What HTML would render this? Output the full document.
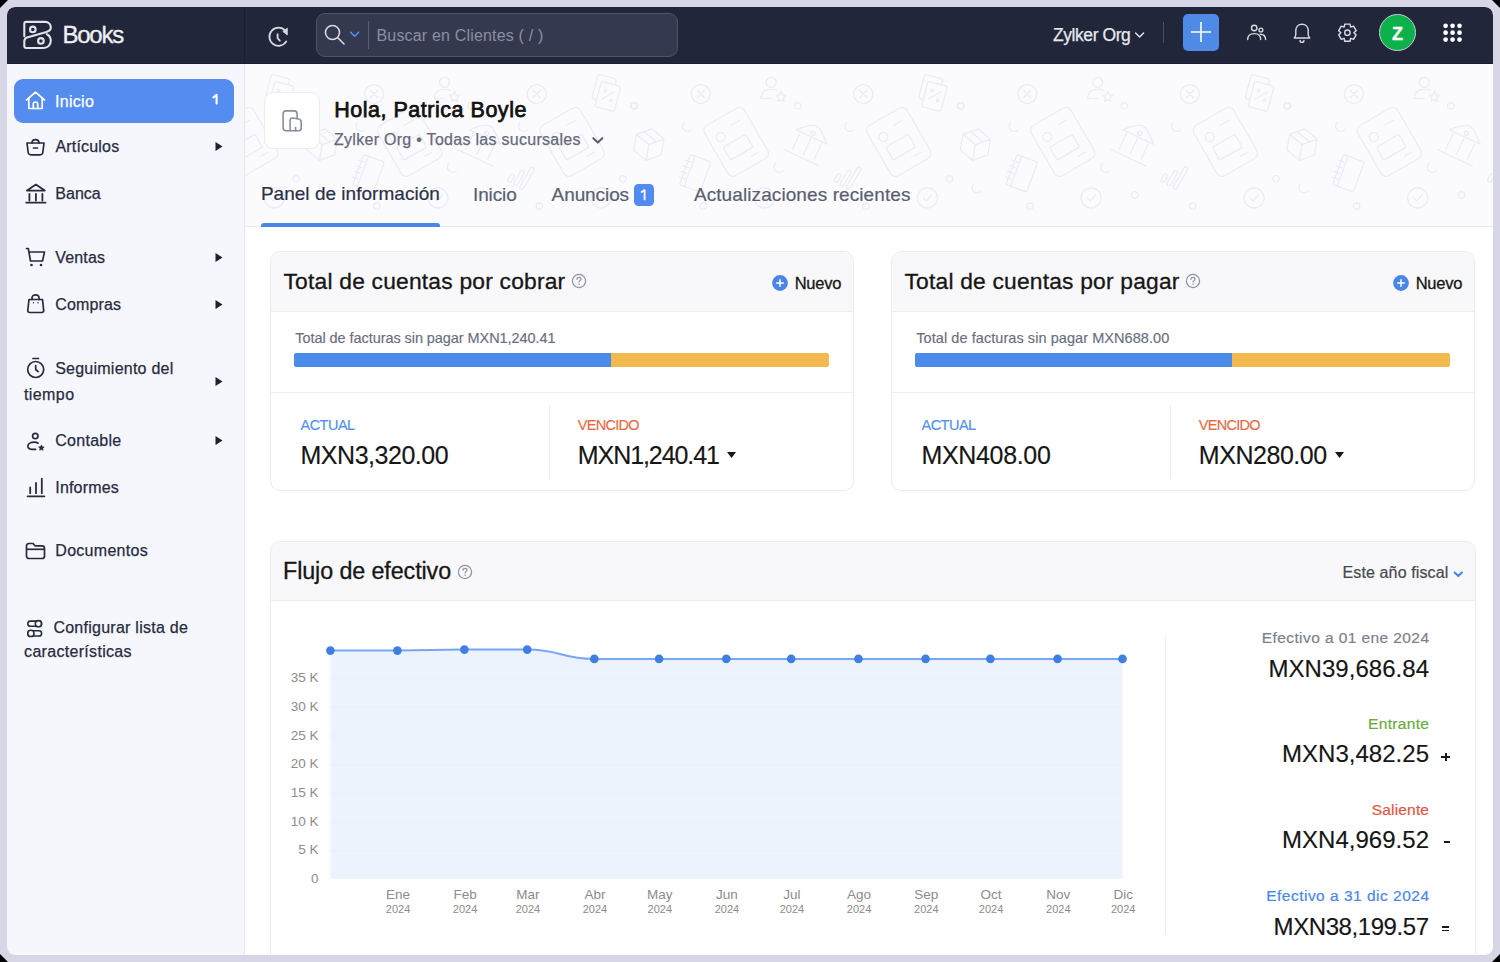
<!DOCTYPE html>
<html><head><meta charset="utf-8"><title>Zoho Books</title>
<style>
html,body{margin:0;padding:0;}
body{width:1500px;height:962px;overflow:hidden;position:relative;background:#000;font-family:"Liberation Sans", sans-serif;}
.frame{position:absolute;left:0;top:0;width:1500px;height:962px;background:#d7d6e7;clip-path:polygon(8px 0,1492px 0,1500px 8px,1500px 954px,1492px 962px,8px 962px,0 954px,0 8px);}
.app{position:absolute;left:0;top:0;width:1500px;height:962px;clip-path:inset(7px 7px 7px 7px round 8px);}
.r{position:absolute;}
.t{position:absolute;white-space:nowrap;line-height:1;}
</style></head>
<body>
<div class="frame"></div>
<div class="app">
<div class="r" style="left:7px;top:7px;width:1486px;height:57px;background:#21263b;border-radius:8px 8px 0 0;"></div>
<div class="r" style="left:244px;top:7px;width:1px;height:57px;background:#1a1e30;"></div>
<div class="r" style="left:7px;top:63px;width:1486px;height:1px;background:#1b1f32;"></div>
<svg class="r" style="left:18px;top:16px;" width="40" height="38" viewBox="0 0 40 38"><g fill="none" stroke="#e2e3e9" stroke-width="2.1" stroke-linecap="round" stroke-linejoin="round"><path d="M6.3 20.2 V7.9 Q6.3 5.9 8.3 5.9 H27 C30.5 5.9 32.8 8.5 32.8 11.5 C32.8 14 31 15.3 28.5 15.9 L9 21.6 C7.3 22.1 6.3 23.5 6.3 25.5 V30 Q6.3 32 8.3 32 H25.7 C29.8 32 32.8 28.7 32.8 24.8 C32.8 21.6 31 19.3 28.8 18.3"/><circle cx="14.8" cy="13.4" r="2.8"/><circle cx="22.9" cy="24.9" r="2.8"/></g></svg>
<div class="t " style="top:23.00px;font-size:24px;color:#eeeff3;letter-spacing:-1.241px;-webkit-text-stroke:0.35px #eeeff3;left:62.50px;">Books</div>
<svg class="r" style="left:262px;top:22.8px;" width="32" height="30" viewBox="0 0 32 30"><g fill="none" stroke="#d6d8e0" stroke-width="1.8" stroke-linecap="round" stroke-linejoin="round"><path d="M23.3 7.6 A9.1 9.1 0 1 0 24.3 18.4"/><path d="M15.6 11.2 V15.1 L17.8 17.6"/></g><path d="M25.3 5.2 L25.3 12 L20.8 8.4 Z" fill="#d6d8e0" stroke="#d6d8e0" stroke-width="0.8" stroke-linejoin="round"/></svg>
<div class="r" style="left:316px;top:13px;width:362px;height:44px;background:#353950;border:1.5px solid #50546a;border-radius:9px;box-sizing:border-box;"></div>
<svg class="r" style="left:324px;top:24px;" width="22" height="21" viewBox="0 0 22 21"><g fill="none" stroke="#d8dae2" stroke-width="1.6" stroke-linecap="round"><circle cx="8.5" cy="8.5" r="7"/><path d="M13.8 13.8 L20 20"/></g></svg>
<svg class="r" style="left:348px;top:29px;" width="13" height="10" viewBox="348 29 13 10"><path d="M350.6 32.2 L354.6 36.2 L358.6 32.2" fill="none" stroke="#4f8ff0" stroke-width="1.6" stroke-linecap="round" stroke-linejoin="round"/></svg>
<div class="r" style="left:368px;top:21px;width:1px;height:28px;background:#5b5f74;"></div>
<div class="t " style="top:28.00px;font-size:16px;color:#8c8fa1;letter-spacing:0.173px;left:376.50px;">Buscar en Clientes ( / )</div>
<div class="t " style="top:27.00px;font-size:17.5px;color:#e8e9ee;letter-spacing:-0.427px;-webkit-text-stroke:0.25px #e8e9ee;left:1053.00px;">Zylker Org</div>
<svg class="r" style="left:1133px;top:30px;" width="14" height="10" viewBox="1133 30 14 10"><path d="M1135.6 33.1 L1139.6 37.1 L1143.6 33.1" fill="none" stroke="#e8e9ee" stroke-width="1.4" stroke-linecap="round" stroke-linejoin="round"/></svg>
<div class="r" style="left:1163px;top:22px;width:1px;height:21px;background:#4a4e63;"></div>
<div class="r" style="left:1183px;top:14px;width:36px;height:37px;background:#4f8ae6;border-radius:5px;"></div>
<svg class="r" style="left:1191px;top:22px;" width="20" height="20" viewBox="0 0 20 20"><path d="M10 0 V20 M0 10 H20" stroke="#fff" stroke-width="1.6"/></svg>
<svg class="r" style="left:1244px;top:22px;" width="24" height="20" viewBox="1244 22 24 20"><g fill="none" stroke="#d9dbe3" stroke-width="1.4" stroke-linecap="round"><circle cx="1254.2" cy="28" r="2.7"/><path d="M1247.7 39.6 C1247.7 35.6 1250.5 33.6 1254.2 33.6 C1257.9 33.6 1260.7 35.6 1260.7 39.6"/><circle cx="1260.9" cy="30" r="1.9"/><path d="M1260.2 34.3 C1263.4 34.3 1265.6 36.2 1265.6 39.6"/></g></svg>
<svg class="r" style="left:1292px;top:22px;" width="20" height="22" viewBox="1292 22 20 22"><g fill="none" stroke="#d9dbe3" stroke-width="1.4" stroke-linejoin="round" stroke-linecap="round"><path d="M1294.3 38 C1295.4 36.8 1295.8 35.8 1295.8 34.3 V30.6 C1295.8 26.7 1298.5 24.2 1302 24.2 C1305.5 24.2 1308.2 26.7 1308.2 30.6 V34.3 C1308.2 35.8 1308.6 36.8 1309.7 38 Z"/><path d="M1300.1 40.4 A1.9 1.9 0 0 0 1303.9 40.4"/></g></svg>
<svg class="r" style="left:1336px;top:21px;" width="23" height="23" viewBox="1336 21 23 23"><g fill="none" stroke="#d9dbe3" stroke-width="1.4" stroke-linejoin="round"><path d="M1344.74 24.10 L1350.06 24.10 L1350.56 26.91 L1350.83 27.06 L1353.52 26.10 L1356.18 30.70 L1354.00 32.54 L1354.00 32.86 L1356.18 34.70 L1353.52 39.30 L1350.83 38.34 L1350.56 38.49 L1350.06 41.30 L1344.74 41.30 L1344.24 38.49 L1343.97 38.34 L1341.28 39.30 L1338.62 34.70 L1340.80 32.86 L1340.80 32.54 L1338.62 30.70 L1341.28 26.10 L1343.97 27.06 L1344.24 26.91Z"/><circle cx="1347.4" cy="32.7" r="2.7"/></g></svg>
<div class="r" style="left:1379px;top:14px;width:37px;height:37px;background:#0db14b;border:1.5px solid #c9cbd3;border-radius:50%;box-sizing:border-box;"></div>
<div class="t " style="top:25.00px;font-size:18px;color:#ffffff;font-weight:700;-webkit-text-stroke:0.3px #ffffff;left:1379.00px;width:37px;text-align:center;">Z</div>
<svg class="r" style="left:1440px;top:20px;" width="25" height="25" viewBox="1440 20 25 25"><circle cx="1445.60" cy="25.80" r="2.35" fill="#ffffff"/><circle cx="1445.60" cy="32.70" r="2.35" fill="#ffffff"/><circle cx="1445.60" cy="39.60" r="2.35" fill="#ffffff"/><circle cx="1452.55" cy="25.80" r="2.35" fill="#ffffff"/><circle cx="1452.55" cy="32.70" r="2.35" fill="#ffffff"/><circle cx="1452.55" cy="39.60" r="2.35" fill="#ffffff"/><circle cx="1459.50" cy="25.80" r="2.35" fill="#ffffff"/><circle cx="1459.50" cy="32.70" r="2.35" fill="#ffffff"/><circle cx="1459.50" cy="39.60" r="2.35" fill="#ffffff"/></svg>
<div class="r" style="left:7px;top:64px;width:237px;height:891px;background:#f6f7fc;border-radius:0 0 0 8px;"></div>
<div class="r" style="left:244px;top:64px;width:1.5px;height:891px;background:#e6e7ee;"></div>
<div class="r" style="left:14px;top:79px;width:220.4px;height:44px;background:#558cef;border-radius:9px;"></div>
<svg class="r" style="left:25px;top:91px;" width="21" height="19" viewBox="0 0 21 19"><g fill="none" stroke="#fff" stroke-width="1.7" stroke-linejoin="round" stroke-linecap="round"><path d="M1.5 9 L10.5 1.2 L19.5 9 M3.8 7.5 V17.5 H17.2 V7.5"/><path d="M8.3 17.5 V13.2 A2.2 2.2 0 0 1 12.7 13.2 V17.5"/></g></svg>
<div class="t " style="top:94.00px;font-size:16px;color:#ffffff;letter-spacing:0.268px;-webkit-text-stroke:0.25px #ffffff;left:55.10px;">Inicio</div>
<svg class="r" style="left:210px;top:90px;" width="12" height="18" viewBox="210 90 12 18"><path d="M213.4 97.4 L216.6 94.8 V103.6" fill="none" stroke="#fff" stroke-width="2.1" stroke-linecap="round" stroke-linejoin="round"/></svg>
<svg class="r" style="left:25px;top:137px;" width="21" height="19" viewBox="0 0 21 19"><g fill="none" stroke="#262b3f" stroke-width="1.7" stroke-linejoin="round" stroke-linecap="round"><path d="M7 6 C7 1.5 14 1.5 14 6"/><path d="M2 6 H19 L17.8 15.5 C17.6 17 16.5 17.8 15 17.8 H6 C4.5 17.8 3.4 17 3.2 15.5 Z"/><path d="M8.5 11 H12.5"/></g></svg>
<div class="t " style="top:139.00px;font-size:16px;color:#262b3f;letter-spacing:0.191px;-webkit-text-stroke:0.25px #262b3f;left:55.40px;">Artículos</div>
<svg class="r" style="left:22px;top:180px;" width="28" height="26" viewBox="22 180 28 26"><g fill="none" stroke="#262b3f" stroke-width="1.8" stroke-linejoin="round" stroke-linecap="round"><path d="M27 190.6 L35.9 184.6 L44.8 190.6 Z"/><path d="M29.4 194 V200.6 M35.9 194 V200.6 M42.4 194 V200.6"/><path d="M26.2 202.6 H45.6"/></g></svg>
<div class="t " style="top:186.00px;font-size:16px;color:#262b3f;letter-spacing:0.022px;-webkit-text-stroke:0.25px #262b3f;left:55.30px;">Banca</div>
<svg class="r" style="left:25px;top:247px;" width="22" height="20" viewBox="0 0 22 20"><g fill="none" stroke="#262b3f" stroke-width="1.7" stroke-linejoin="round" stroke-linecap="round"><path d="M1.5 1.5 H3.3 L5.5 14 H17.5 L19.5 5 H5"/></g><circle cx="6.5" cy="18" r="1.3" fill="#262b3f"/><circle cx="16" cy="18" r="1.3" fill="#262b3f"/></svg>
<div class="t " style="top:250.00px;font-size:16px;color:#262b3f;letter-spacing:0.172px;-webkit-text-stroke:0.25px #262b3f;left:55.20px;">Ventas</div>
<svg class="r" style="left:26px;top:293px;" width="20" height="21" viewBox="0 0 20 21"><g fill="none" stroke="#262b3f" stroke-width="1.7" stroke-linejoin="round" stroke-linecap="round"><path d="M6 6.5 V5 C6 0.8 13 0.8 13 5 V6.5"/><path d="M3 6.5 H16.5 L17.7 17.5 C17.8 18.7 17 19.5 15.8 19.5 H3.7 C2.5 19.5 1.7 18.7 1.8 17.5 Z"/></g><circle cx="7.5" cy="9.8" r="0.7" fill="#262b3f"/><circle cx="12" cy="9.8" r="0.7" fill="#262b3f"/></svg>
<div class="t " style="top:297.00px;font-size:16px;color:#262b3f;letter-spacing:0.166px;-webkit-text-stroke:0.25px #262b3f;left:55.20px;">Compras</div>
<svg class="r" style="left:26px;top:357px;" width="20" height="22" viewBox="0 0 20 22"><g fill="none" stroke="#262b3f" stroke-width="1.7" stroke-linejoin="round" stroke-linecap="round"><path d="M7 1.5 H12.5"/><circle cx="9.7" cy="12.5" r="8"/><path d="M9.7 8.5 V12.5 L12 14.5"/></g></svg>
<div class="t " style="top:361.00px;font-size:16px;color:#262b3f;letter-spacing:0.237px;-webkit-text-stroke:0.25px #262b3f;left:55.20px;">Seguimiento del</div>
<div class="t " style="top:387.00px;font-size:16px;color:#262b3f;letter-spacing:0.406px;-webkit-text-stroke:0.25px #262b3f;left:24.00px;">tiempo</div>
<svg class="r" style="left:22px;top:428px;" width="26" height="26" viewBox="22 428 26 26"><g fill="none" stroke="#262b3f" stroke-width="1.7" stroke-linecap="round" stroke-linejoin="round"><circle cx="35.3" cy="436" r="2.7"/><path d="M38 443.2 C37 442.5 35.8 442.2 34.3 442.2 C30.6 442.2 27.9 443.9 27.9 446.1 C27.9 448.1 29.5 449.3 31.6 449.3 H35.6"/></g><path d="M41.4 444.9 L42.3 446.7 L44.2 447 L42.8 448.4 L43.1 450.3 L41.4 449.4 L39.7 450.3 L40 448.4 L38.6 447 L40.5 446.7 Z" fill="#262b3f" stroke="#262b3f" stroke-width="0.6" stroke-linejoin="round"/></svg>
<div class="t " style="top:433.00px;font-size:16px;color:#262b3f;letter-spacing:0.261px;-webkit-text-stroke:0.25px #262b3f;left:55.30px;">Contable</div>
<svg class="r" style="left:22px;top:474px;" width="26" height="26" viewBox="22 474 26 26"><g fill="none" stroke="#262b3f" stroke-width="1.8" stroke-linecap="round"><path d="M30.2 487.3 V493.2 M36 483 V493.2 M41.8 478.6 V493.2 M27.6 496.3 H44.4"/></g></svg>
<div class="t " style="top:480.00px;font-size:16px;color:#262b3f;letter-spacing:0.165px;-webkit-text-stroke:0.25px #262b3f;left:55.30px;">Informes</div>
<svg class="r" style="left:25.3px;top:542px;" width="21" height="18" viewBox="0 0 21 18"><g fill="none" stroke="#262b3f" stroke-width="1.7" stroke-linejoin="round"><path d="M1.5 4 C1.5 2.5 2.5 1.5 4 1.5 H8 L10 3.8 H17 C18.5 3.8 19.5 4.8 19.5 6.3 V14 C19.5 15.5 18.5 16.5 17 16.5 H4 C2.5 16.5 1.5 15.5 1.5 14 Z"/><path d="M1.5 7.3 H19.5"/></g></svg>
<div class="t " style="top:543.00px;font-size:16px;color:#262b3f;letter-spacing:0.283px;-webkit-text-stroke:0.25px #262b3f;left:55.30px;">Documentos</div>
<svg class="r" style="left:22px;top:614px;" width="26" height="26" viewBox="22 614 26 26"><g fill="none" stroke="#262b3f" stroke-width="1.55"><rect x="27.8" y="621.1" width="13.8" height="5.2" rx="2.6"/><circle cx="38.4" cy="623.7" r="3.1" fill="#f6f7fc"/><rect x="27.8" y="630.8" width="13.8" height="5.2" rx="2.6"/><circle cx="30.9" cy="633.4" r="3.1" fill="#f6f7fc"/></g></svg>
<div class="t " style="top:620.00px;font-size:16px;color:#262b3f;letter-spacing:0.254px;-webkit-text-stroke:0.25px #262b3f;left:53.40px;">Configurar lista de</div>
<div class="t " style="top:644.00px;font-size:16px;color:#262b3f;letter-spacing:0.306px;-webkit-text-stroke:0.25px #262b3f;left:24.10px;">características</div>
<svg class="r" style="left:215px;top:142.0px;" width="8" height="9" viewBox="0 0 8 9"><path d="M0.5 0 L7.5 4.5 L0.5 9 Z" fill="#1d2133"/></svg>
<svg class="r" style="left:215px;top:252.7px;" width="8" height="9" viewBox="0 0 8 9"><path d="M0.5 0 L7.5 4.5 L0.5 9 Z" fill="#1d2133"/></svg>
<svg class="r" style="left:215px;top:299.7px;" width="8" height="9" viewBox="0 0 8 9"><path d="M0.5 0 L7.5 4.5 L0.5 9 Z" fill="#1d2133"/></svg>
<svg class="r" style="left:215px;top:377.4px;" width="8" height="9" viewBox="0 0 8 9"><path d="M0.5 0 L7.5 4.5 L0.5 9 Z" fill="#1d2133"/></svg>
<svg class="r" style="left:215px;top:436.0px;" width="8" height="9" viewBox="0 0 8 9"><path d="M0.5 0 L7.5 4.5 L0.5 9 Z" fill="#1d2133"/></svg>
<div class="r" style="left:245px;top:64px;width:1248px;height:163px;background:#fbfbfe;"></div>
<div class="r" style="left:245px;top:226px;width:1248px;height:1px;background:#e7e8ef;"></div>
<div class="r" style="left:245px;top:227px;width:1248px;height:728px;background:#ffffff;border-radius:0 0 8px 0;"></div>
<svg class="r" style="left:245px;top:64px;" width="1248" height="163" viewBox="245 64 1248 163"><g fill="none" stroke="#eaeaf8" stroke-width="1.25" stroke-linecap="round" stroke-linejoin="round"><g transform="translate(-46.8 94.0) rotate(15)"><rect x="-13" y="-17" width="19" height="25" rx="2"/><rect x="-8" y="-11" width="20" height="26" rx="2" fill="#fbfbfe"/><path d="M-3 6 L7 -4"/><circle cx="-2" cy="-3" r="1.2"/><circle cx="6" cy="5" r="1.2"/></g><g transform="translate(-18.7 105.8) rotate(0)"><circle r="3.3"/></g><g transform="translate(-30.4 178.8) rotate(0)"><circle r="3.3"/></g><g transform="translate(144.5 105.8) rotate(0)"><circle r="3.3"/></g><g transform="translate(307.1 105.8) rotate(0)"><circle r="3.3"/></g><g transform="translate(50.2 206.1) rotate(0)"><circle r="3.3"/></g><g transform="translate(212.8 206.1) rotate(0)"><circle r="3.3"/></g><g transform="translate(155.0 195.0) rotate(0)"><circle r="3.3"/></g><g transform="translate(-4.4 144.6) rotate(10)"><path d="M0 -16 L14 -8 L14 8 L0 16 L-14 8 L-14 -8 Z M-14 -8 L0 0 L14 -8 M0 0 V16 M-7 -12 L7 -4"/></g><g transform="translate(33.8 126.9) rotate(0)"><path d="M-3 -4.5 A5 5 0 0 0 4.5 3"/></g><g transform="translate(196.4 126.9) rotate(0)"><path d="M-3 -4.5 A5 5 0 0 0 4.5 3"/></g><g transform="translate(125.4 167.9) rotate(0)"><path d="M-3 -4.5 A5 5 0 0 0 4.5 3"/></g><g transform="translate(-3.1 188.4) rotate(0)"><path d="M-3 -4.5 A5 5 0 0 0 4.5 3"/></g><g transform="translate(42.0 173.3) rotate(20)"><rect x="-11" y="-16" width="22" height="32" rx="2"/><path d="M-6 -16 V16 M-14 -9 H-8 M-14 -3 H-8 M-14 3 H-8 M-14 9 H-8"/></g><g transform="translate(47.5 94.0) rotate(0)"><circle r="9.5"/><path d="M-3.5 -3.5 L3.5 3.5 M3.5 -3.5 L-3.5 3.5"/></g><g transform="translate(210.1 94.0) rotate(0)"><circle r="9.5"/><path d="M-3.5 -3.5 L3.5 3.5 M3.5 -3.5 L-3.5 3.5"/></g><g transform="translate(83.0 141.9) rotate(-30)"><rect x="-23" y="-29" width="46" height="58" rx="6"/><circle cx="-11" cy="-12" r="4.5"/><rect x="-14" y="-2" width="26" height="15" rx="1.5"/><path d="M4 -17 H14 M6 20 H14"/></g><g transform="translate(245.6 141.9) rotate(-30)"><rect x="-23" y="-29" width="46" height="58" rx="6"/><circle cx="-11" cy="-12" r="4.5"/><rect x="-14" y="-2" width="26" height="15" rx="1.5"/><path d="M4 -17 H14 M6 20 H14"/></g><g transform="translate(119.9 91.3) rotate(0)"><circle cx="-2" cy="-9" r="5"/><path d="M-12 7 C-12 0 -8 -2 -2 -2 C1 -2 3 -1.5 4 -1"/><path d="M-12 7 H-2"/><path d="M8 0 L9.5 3.5 L13 4 L10.5 6.5 L11 10 L8 8.3 L5 10 L5.5 6.5 L3 4 L6.5 3.5 Z"/></g><g transform="translate(155.4 143.3) rotate(25)"><path d="M-17 -7 C-10 -15 -5 -19 0 -19 C5 -19 12 -12 17 -7 Z M-12 -5 V12 M0 -5 V12 M12 -5 V12 M-19 16 H19"/><circle cx="0" cy="-11" r="2"/></g><g transform="translate(193.7 176.0) rotate(30)"><rect x="-9" y="2" width="4" height="9" rx="2"/><rect x="-2" y="-6" width="4" height="17" rx="2"/><rect x="5" y="-14" width="4" height="25" rx="2"/></g><g transform="translate(111.3 197.9) rotate(0)"><circle r="10"/><path d="M-4 0 L-1 3 L4.5 -3"/></g><g transform="translate(274.3 197.9) rotate(0)"><circle r="10"/><path d="M-4 0 L-1 3 L4.5 -3"/></g><g transform="translate(279.8 94.0) rotate(15)"><rect x="-13" y="-17" width="19" height="25" rx="2"/><rect x="-8" y="-11" width="20" height="26" rx="2" fill="#fbfbfe"/><path d="M-3 6 L7 -4"/><circle cx="-2" cy="-3" r="1.2"/><circle cx="6" cy="5" r="1.2"/></g><g transform="translate(307.9 105.8) rotate(0)"><circle r="3.3"/></g><g transform="translate(296.2 178.8) rotate(0)"><circle r="3.3"/></g><g transform="translate(471.1 105.8) rotate(0)"><circle r="3.3"/></g><g transform="translate(633.7 105.8) rotate(0)"><circle r="3.3"/></g><g transform="translate(376.8 206.1) rotate(0)"><circle r="3.3"/></g><g transform="translate(539.4 206.1) rotate(0)"><circle r="3.3"/></g><g transform="translate(481.6 195.0) rotate(0)"><circle r="3.3"/></g><g transform="translate(322.2 144.6) rotate(10)"><path d="M0 -16 L14 -8 L14 8 L0 16 L-14 8 L-14 -8 Z M-14 -8 L0 0 L14 -8 M0 0 V16 M-7 -12 L7 -4"/></g><g transform="translate(360.4 126.9) rotate(0)"><path d="M-3 -4.5 A5 5 0 0 0 4.5 3"/></g><g transform="translate(523.0 126.9) rotate(0)"><path d="M-3 -4.5 A5 5 0 0 0 4.5 3"/></g><g transform="translate(452.0 167.9) rotate(0)"><path d="M-3 -4.5 A5 5 0 0 0 4.5 3"/></g><g transform="translate(323.5 188.4) rotate(0)"><path d="M-3 -4.5 A5 5 0 0 0 4.5 3"/></g><g transform="translate(368.6 173.3) rotate(20)"><rect x="-11" y="-16" width="22" height="32" rx="2"/><path d="M-6 -16 V16 M-14 -9 H-8 M-14 -3 H-8 M-14 3 H-8 M-14 9 H-8"/></g><g transform="translate(374.1 94.0) rotate(0)"><circle r="9.5"/><path d="M-3.5 -3.5 L3.5 3.5 M3.5 -3.5 L-3.5 3.5"/></g><g transform="translate(536.7 94.0) rotate(0)"><circle r="9.5"/><path d="M-3.5 -3.5 L3.5 3.5 M3.5 -3.5 L-3.5 3.5"/></g><g transform="translate(409.6 141.9) rotate(-30)"><rect x="-23" y="-29" width="46" height="58" rx="6"/><circle cx="-11" cy="-12" r="4.5"/><rect x="-14" y="-2" width="26" height="15" rx="1.5"/><path d="M4 -17 H14 M6 20 H14"/></g><g transform="translate(572.2 141.9) rotate(-30)"><rect x="-23" y="-29" width="46" height="58" rx="6"/><circle cx="-11" cy="-12" r="4.5"/><rect x="-14" y="-2" width="26" height="15" rx="1.5"/><path d="M4 -17 H14 M6 20 H14"/></g><g transform="translate(446.5 91.3) rotate(0)"><circle cx="-2" cy="-9" r="5"/><path d="M-12 7 C-12 0 -8 -2 -2 -2 C1 -2 3 -1.5 4 -1"/><path d="M-12 7 H-2"/><path d="M8 0 L9.5 3.5 L13 4 L10.5 6.5 L11 10 L8 8.3 L5 10 L5.5 6.5 L3 4 L6.5 3.5 Z"/></g><g transform="translate(482.0 143.3) rotate(25)"><path d="M-17 -7 C-10 -15 -5 -19 0 -19 C5 -19 12 -12 17 -7 Z M-12 -5 V12 M0 -5 V12 M12 -5 V12 M-19 16 H19"/><circle cx="0" cy="-11" r="2"/></g><g transform="translate(520.3 176.0) rotate(30)"><rect x="-9" y="2" width="4" height="9" rx="2"/><rect x="-2" y="-6" width="4" height="17" rx="2"/><rect x="5" y="-14" width="4" height="25" rx="2"/></g><g transform="translate(437.9 197.9) rotate(0)"><circle r="10"/><path d="M-4 0 L-1 3 L4.5 -3"/></g><g transform="translate(600.9 197.9) rotate(0)"><circle r="10"/><path d="M-4 0 L-1 3 L4.5 -3"/></g><g transform="translate(606.4 94.0) rotate(15)"><rect x="-13" y="-17" width="19" height="25" rx="2"/><rect x="-8" y="-11" width="20" height="26" rx="2" fill="#fbfbfe"/><path d="M-3 6 L7 -4"/><circle cx="-2" cy="-3" r="1.2"/><circle cx="6" cy="5" r="1.2"/></g><g transform="translate(634.5 105.8) rotate(0)"><circle r="3.3"/></g><g transform="translate(622.8 178.8) rotate(0)"><circle r="3.3"/></g><g transform="translate(797.7 105.8) rotate(0)"><circle r="3.3"/></g><g transform="translate(960.3 105.8) rotate(0)"><circle r="3.3"/></g><g transform="translate(703.4 206.1) rotate(0)"><circle r="3.3"/></g><g transform="translate(866.0 206.1) rotate(0)"><circle r="3.3"/></g><g transform="translate(808.2 195.0) rotate(0)"><circle r="3.3"/></g><g transform="translate(648.8 144.6) rotate(10)"><path d="M0 -16 L14 -8 L14 8 L0 16 L-14 8 L-14 -8 Z M-14 -8 L0 0 L14 -8 M0 0 V16 M-7 -12 L7 -4"/></g><g transform="translate(687.0 126.9) rotate(0)"><path d="M-3 -4.5 A5 5 0 0 0 4.5 3"/></g><g transform="translate(849.6 126.9) rotate(0)"><path d="M-3 -4.5 A5 5 0 0 0 4.5 3"/></g><g transform="translate(778.6 167.9) rotate(0)"><path d="M-3 -4.5 A5 5 0 0 0 4.5 3"/></g><g transform="translate(650.1 188.4) rotate(0)"><path d="M-3 -4.5 A5 5 0 0 0 4.5 3"/></g><g transform="translate(695.2 173.3) rotate(20)"><rect x="-11" y="-16" width="22" height="32" rx="2"/><path d="M-6 -16 V16 M-14 -9 H-8 M-14 -3 H-8 M-14 3 H-8 M-14 9 H-8"/></g><g transform="translate(700.7 94.0) rotate(0)"><circle r="9.5"/><path d="M-3.5 -3.5 L3.5 3.5 M3.5 -3.5 L-3.5 3.5"/></g><g transform="translate(863.3 94.0) rotate(0)"><circle r="9.5"/><path d="M-3.5 -3.5 L3.5 3.5 M3.5 -3.5 L-3.5 3.5"/></g><g transform="translate(736.2 141.9) rotate(-30)"><rect x="-23" y="-29" width="46" height="58" rx="6"/><circle cx="-11" cy="-12" r="4.5"/><rect x="-14" y="-2" width="26" height="15" rx="1.5"/><path d="M4 -17 H14 M6 20 H14"/></g><g transform="translate(898.8 141.9) rotate(-30)"><rect x="-23" y="-29" width="46" height="58" rx="6"/><circle cx="-11" cy="-12" r="4.5"/><rect x="-14" y="-2" width="26" height="15" rx="1.5"/><path d="M4 -17 H14 M6 20 H14"/></g><g transform="translate(773.1 91.3) rotate(0)"><circle cx="-2" cy="-9" r="5"/><path d="M-12 7 C-12 0 -8 -2 -2 -2 C1 -2 3 -1.5 4 -1"/><path d="M-12 7 H-2"/><path d="M8 0 L9.5 3.5 L13 4 L10.5 6.5 L11 10 L8 8.3 L5 10 L5.5 6.5 L3 4 L6.5 3.5 Z"/></g><g transform="translate(808.6 143.3) rotate(25)"><path d="M-17 -7 C-10 -15 -5 -19 0 -19 C5 -19 12 -12 17 -7 Z M-12 -5 V12 M0 -5 V12 M12 -5 V12 M-19 16 H19"/><circle cx="0" cy="-11" r="2"/></g><g transform="translate(846.9 176.0) rotate(30)"><rect x="-9" y="2" width="4" height="9" rx="2"/><rect x="-2" y="-6" width="4" height="17" rx="2"/><rect x="5" y="-14" width="4" height="25" rx="2"/></g><g transform="translate(764.5 197.9) rotate(0)"><circle r="10"/><path d="M-4 0 L-1 3 L4.5 -3"/></g><g transform="translate(927.5 197.9) rotate(0)"><circle r="10"/><path d="M-4 0 L-1 3 L4.5 -3"/></g><g transform="translate(933.0 94.0) rotate(15)"><rect x="-13" y="-17" width="19" height="25" rx="2"/><rect x="-8" y="-11" width="20" height="26" rx="2" fill="#fbfbfe"/><path d="M-3 6 L7 -4"/><circle cx="-2" cy="-3" r="1.2"/><circle cx="6" cy="5" r="1.2"/></g><g transform="translate(961.1 105.8) rotate(0)"><circle r="3.3"/></g><g transform="translate(949.4 178.8) rotate(0)"><circle r="3.3"/></g><g transform="translate(1124.3 105.8) rotate(0)"><circle r="3.3"/></g><g transform="translate(1286.9 105.8) rotate(0)"><circle r="3.3"/></g><g transform="translate(1030.0 206.1) rotate(0)"><circle r="3.3"/></g><g transform="translate(1192.6 206.1) rotate(0)"><circle r="3.3"/></g><g transform="translate(1134.8 195.0) rotate(0)"><circle r="3.3"/></g><g transform="translate(975.4 144.6) rotate(10)"><path d="M0 -16 L14 -8 L14 8 L0 16 L-14 8 L-14 -8 Z M-14 -8 L0 0 L14 -8 M0 0 V16 M-7 -12 L7 -4"/></g><g transform="translate(1013.6 126.9) rotate(0)"><path d="M-3 -4.5 A5 5 0 0 0 4.5 3"/></g><g transform="translate(1176.2 126.9) rotate(0)"><path d="M-3 -4.5 A5 5 0 0 0 4.5 3"/></g><g transform="translate(1105.2 167.9) rotate(0)"><path d="M-3 -4.5 A5 5 0 0 0 4.5 3"/></g><g transform="translate(976.7 188.4) rotate(0)"><path d="M-3 -4.5 A5 5 0 0 0 4.5 3"/></g><g transform="translate(1021.8 173.3) rotate(20)"><rect x="-11" y="-16" width="22" height="32" rx="2"/><path d="M-6 -16 V16 M-14 -9 H-8 M-14 -3 H-8 M-14 3 H-8 M-14 9 H-8"/></g><g transform="translate(1027.3 94.0) rotate(0)"><circle r="9.5"/><path d="M-3.5 -3.5 L3.5 3.5 M3.5 -3.5 L-3.5 3.5"/></g><g transform="translate(1189.9 94.0) rotate(0)"><circle r="9.5"/><path d="M-3.5 -3.5 L3.5 3.5 M3.5 -3.5 L-3.5 3.5"/></g><g transform="translate(1062.8 141.9) rotate(-30)"><rect x="-23" y="-29" width="46" height="58" rx="6"/><circle cx="-11" cy="-12" r="4.5"/><rect x="-14" y="-2" width="26" height="15" rx="1.5"/><path d="M4 -17 H14 M6 20 H14"/></g><g transform="translate(1225.4 141.9) rotate(-30)"><rect x="-23" y="-29" width="46" height="58" rx="6"/><circle cx="-11" cy="-12" r="4.5"/><rect x="-14" y="-2" width="26" height="15" rx="1.5"/><path d="M4 -17 H14 M6 20 H14"/></g><g transform="translate(1099.7 91.3) rotate(0)"><circle cx="-2" cy="-9" r="5"/><path d="M-12 7 C-12 0 -8 -2 -2 -2 C1 -2 3 -1.5 4 -1"/><path d="M-12 7 H-2"/><path d="M8 0 L9.5 3.5 L13 4 L10.5 6.5 L11 10 L8 8.3 L5 10 L5.5 6.5 L3 4 L6.5 3.5 Z"/></g><g transform="translate(1135.2 143.3) rotate(25)"><path d="M-17 -7 C-10 -15 -5 -19 0 -19 C5 -19 12 -12 17 -7 Z M-12 -5 V12 M0 -5 V12 M12 -5 V12 M-19 16 H19"/><circle cx="0" cy="-11" r="2"/></g><g transform="translate(1173.5 176.0) rotate(30)"><rect x="-9" y="2" width="4" height="9" rx="2"/><rect x="-2" y="-6" width="4" height="17" rx="2"/><rect x="5" y="-14" width="4" height="25" rx="2"/></g><g transform="translate(1091.1 197.9) rotate(0)"><circle r="10"/><path d="M-4 0 L-1 3 L4.5 -3"/></g><g transform="translate(1254.1 197.9) rotate(0)"><circle r="10"/><path d="M-4 0 L-1 3 L4.5 -3"/></g><g transform="translate(1259.6 94.0) rotate(15)"><rect x="-13" y="-17" width="19" height="25" rx="2"/><rect x="-8" y="-11" width="20" height="26" rx="2" fill="#fbfbfe"/><path d="M-3 6 L7 -4"/><circle cx="-2" cy="-3" r="1.2"/><circle cx="6" cy="5" r="1.2"/></g><g transform="translate(1287.7 105.8) rotate(0)"><circle r="3.3"/></g><g transform="translate(1276.0 178.8) rotate(0)"><circle r="3.3"/></g><g transform="translate(1450.9 105.8) rotate(0)"><circle r="3.3"/></g><g transform="translate(1613.5 105.8) rotate(0)"><circle r="3.3"/></g><g transform="translate(1356.6 206.1) rotate(0)"><circle r="3.3"/></g><g transform="translate(1519.2 206.1) rotate(0)"><circle r="3.3"/></g><g transform="translate(1461.4 195.0) rotate(0)"><circle r="3.3"/></g><g transform="translate(1302.0 144.6) rotate(10)"><path d="M0 -16 L14 -8 L14 8 L0 16 L-14 8 L-14 -8 Z M-14 -8 L0 0 L14 -8 M0 0 V16 M-7 -12 L7 -4"/></g><g transform="translate(1340.2 126.9) rotate(0)"><path d="M-3 -4.5 A5 5 0 0 0 4.5 3"/></g><g transform="translate(1502.8 126.9) rotate(0)"><path d="M-3 -4.5 A5 5 0 0 0 4.5 3"/></g><g transform="translate(1431.8 167.9) rotate(0)"><path d="M-3 -4.5 A5 5 0 0 0 4.5 3"/></g><g transform="translate(1303.3 188.4) rotate(0)"><path d="M-3 -4.5 A5 5 0 0 0 4.5 3"/></g><g transform="translate(1348.4 173.3) rotate(20)"><rect x="-11" y="-16" width="22" height="32" rx="2"/><path d="M-6 -16 V16 M-14 -9 H-8 M-14 -3 H-8 M-14 3 H-8 M-14 9 H-8"/></g><g transform="translate(1353.9 94.0) rotate(0)"><circle r="9.5"/><path d="M-3.5 -3.5 L3.5 3.5 M3.5 -3.5 L-3.5 3.5"/></g><g transform="translate(1516.5 94.0) rotate(0)"><circle r="9.5"/><path d="M-3.5 -3.5 L3.5 3.5 M3.5 -3.5 L-3.5 3.5"/></g><g transform="translate(1389.4 141.9) rotate(-30)"><rect x="-23" y="-29" width="46" height="58" rx="6"/><circle cx="-11" cy="-12" r="4.5"/><rect x="-14" y="-2" width="26" height="15" rx="1.5"/><path d="M4 -17 H14 M6 20 H14"/></g><g transform="translate(1552.0 141.9) rotate(-30)"><rect x="-23" y="-29" width="46" height="58" rx="6"/><circle cx="-11" cy="-12" r="4.5"/><rect x="-14" y="-2" width="26" height="15" rx="1.5"/><path d="M4 -17 H14 M6 20 H14"/></g><g transform="translate(1426.3 91.3) rotate(0)"><circle cx="-2" cy="-9" r="5"/><path d="M-12 7 C-12 0 -8 -2 -2 -2 C1 -2 3 -1.5 4 -1"/><path d="M-12 7 H-2"/><path d="M8 0 L9.5 3.5 L13 4 L10.5 6.5 L11 10 L8 8.3 L5 10 L5.5 6.5 L3 4 L6.5 3.5 Z"/></g><g transform="translate(1461.8 143.3) rotate(25)"><path d="M-17 -7 C-10 -15 -5 -19 0 -19 C5 -19 12 -12 17 -7 Z M-12 -5 V12 M0 -5 V12 M12 -5 V12 M-19 16 H19"/><circle cx="0" cy="-11" r="2"/></g><g transform="translate(1500.1 176.0) rotate(30)"><rect x="-9" y="2" width="4" height="9" rx="2"/><rect x="-2" y="-6" width="4" height="17" rx="2"/><rect x="5" y="-14" width="4" height="25" rx="2"/></g><g transform="translate(1417.7 197.9) rotate(0)"><circle r="10"/><path d="M-4 0 L-1 3 L4.5 -3"/></g><g transform="translate(1580.7 197.9) rotate(0)"><circle r="10"/><path d="M-4 0 L-1 3 L4.5 -3"/></g><g transform="translate(1586.2 94.0) rotate(15)"><rect x="-13" y="-17" width="19" height="25" rx="2"/><rect x="-8" y="-11" width="20" height="26" rx="2" fill="#fbfbfe"/><path d="M-3 6 L7 -4"/><circle cx="-2" cy="-3" r="1.2"/><circle cx="6" cy="5" r="1.2"/></g><g transform="translate(1614.3 105.8) rotate(0)"><circle r="3.3"/></g><g transform="translate(1602.6 178.8) rotate(0)"><circle r="3.3"/></g><g transform="translate(1777.5 105.8) rotate(0)"><circle r="3.3"/></g><g transform="translate(1940.1 105.8) rotate(0)"><circle r="3.3"/></g><g transform="translate(1683.2 206.1) rotate(0)"><circle r="3.3"/></g><g transform="translate(1845.8 206.1) rotate(0)"><circle r="3.3"/></g><g transform="translate(1788.0 195.0) rotate(0)"><circle r="3.3"/></g><g transform="translate(1628.6 144.6) rotate(10)"><path d="M0 -16 L14 -8 L14 8 L0 16 L-14 8 L-14 -8 Z M-14 -8 L0 0 L14 -8 M0 0 V16 M-7 -12 L7 -4"/></g><g transform="translate(1666.8 126.9) rotate(0)"><path d="M-3 -4.5 A5 5 0 0 0 4.5 3"/></g><g transform="translate(1829.4 126.9) rotate(0)"><path d="M-3 -4.5 A5 5 0 0 0 4.5 3"/></g><g transform="translate(1758.4 167.9) rotate(0)"><path d="M-3 -4.5 A5 5 0 0 0 4.5 3"/></g><g transform="translate(1629.9 188.4) rotate(0)"><path d="M-3 -4.5 A5 5 0 0 0 4.5 3"/></g><g transform="translate(1675.0 173.3) rotate(20)"><rect x="-11" y="-16" width="22" height="32" rx="2"/><path d="M-6 -16 V16 M-14 -9 H-8 M-14 -3 H-8 M-14 3 H-8 M-14 9 H-8"/></g><g transform="translate(1680.5 94.0) rotate(0)"><circle r="9.5"/><path d="M-3.5 -3.5 L3.5 3.5 M3.5 -3.5 L-3.5 3.5"/></g><g transform="translate(1843.1 94.0) rotate(0)"><circle r="9.5"/><path d="M-3.5 -3.5 L3.5 3.5 M3.5 -3.5 L-3.5 3.5"/></g><g transform="translate(1716.0 141.9) rotate(-30)"><rect x="-23" y="-29" width="46" height="58" rx="6"/><circle cx="-11" cy="-12" r="4.5"/><rect x="-14" y="-2" width="26" height="15" rx="1.5"/><path d="M4 -17 H14 M6 20 H14"/></g><g transform="translate(1878.6 141.9) rotate(-30)"><rect x="-23" y="-29" width="46" height="58" rx="6"/><circle cx="-11" cy="-12" r="4.5"/><rect x="-14" y="-2" width="26" height="15" rx="1.5"/><path d="M4 -17 H14 M6 20 H14"/></g><g transform="translate(1752.9 91.3) rotate(0)"><circle cx="-2" cy="-9" r="5"/><path d="M-12 7 C-12 0 -8 -2 -2 -2 C1 -2 3 -1.5 4 -1"/><path d="M-12 7 H-2"/><path d="M8 0 L9.5 3.5 L13 4 L10.5 6.5 L11 10 L8 8.3 L5 10 L5.5 6.5 L3 4 L6.5 3.5 Z"/></g><g transform="translate(1788.4 143.3) rotate(25)"><path d="M-17 -7 C-10 -15 -5 -19 0 -19 C5 -19 12 -12 17 -7 Z M-12 -5 V12 M0 -5 V12 M12 -5 V12 M-19 16 H19"/><circle cx="0" cy="-11" r="2"/></g><g transform="translate(1826.7 176.0) rotate(30)"><rect x="-9" y="2" width="4" height="9" rx="2"/><rect x="-2" y="-6" width="4" height="17" rx="2"/><rect x="5" y="-14" width="4" height="25" rx="2"/></g><g transform="translate(1744.3 197.9) rotate(0)"><circle r="10"/><path d="M-4 0 L-1 3 L4.5 -3"/></g><g transform="translate(1907.3 197.9) rotate(0)"><circle r="10"/><path d="M-4 0 L-1 3 L4.5 -3"/></g></g></svg>
<div class="r" style="left:264px;top:92px;width:56px;height:57px;background:#fff;border:1px solid #ebebf2;border-radius:9px;box-sizing:border-box;"></div>
<svg class="r" style="left:278px;top:106px;" width="28" height="30" viewBox="278 106 28 30"><g fill="none" stroke="#8a8d9c" stroke-width="1.6" stroke-linejoin="round" stroke-linecap="round"><path d="M290.1 130.8 H286.1 Q283.1 130.8 283.1 127.8 V113.9 Q283.1 110.9 286.1 110.9 H294.1 Q297.1 110.9 297.1 113.9 V118.3"/><path d="M290.1 130.8 V120.5 Q290.1 117.6 293 118 L298.5 119 Q301.2 119.6 301.2 122.3 V128 Q301.2 130.8 298.4 130.8 H290.1"/><path d="M295.6 127.6 V130.8"/></g></svg>
<div class="t " style="top:100.00px;font-size:21.5px;color:#111111;letter-spacing:0.520px;-webkit-text-stroke:0.75px #111111;left:334.20px;">Hola, Patrica Boyle</div>
<div class="t " style="top:132.00px;font-size:16px;color:#66697b;letter-spacing:0.286px;-webkit-text-stroke:0.25px #66697b;left:334.00px;">Zylker Org • Todas las sucursales</div>
<svg class="r" style="left:590px;top:134px;" width="16" height="12" viewBox="590 134 16 12"><path d="M593.3 138.2 L597.8 142.6 L602.3 138.2" fill="none" stroke="#5b5f70" stroke-width="2.1" stroke-linecap="round" stroke-linejoin="round"/></svg>
<div class="t " style="top:184.00px;font-size:19px;color:#2b3044;letter-spacing:0.022px;-webkit-text-stroke:0.2px #2b3044;left:260.90px;">Panel de información</div>
<div class="t " style="top:185.00px;font-size:19px;color:#5a5e70;letter-spacing:-0.124px;-webkit-text-stroke:0.2px #5a5e70;left:473.00px;">Inicio</div>
<div class="t " style="top:185.00px;font-size:19px;color:#5a5e70;letter-spacing:-0.093px;-webkit-text-stroke:0.2px #5a5e70;left:551.60px;">Anuncios</div>
<div class="r" style="left:634.4px;top:184px;width:19.200000000000045px;height:21.599999999999994px;background:#528bf0;border-radius:4.5px;"></div>
<svg class="r" style="left:636px;top:186px;" width="16" height="18" viewBox="636 186 16 18"><path d="M641.6 192 L644.6 189.9 V199.4" fill="none" stroke="#fff" stroke-width="1.8" stroke-linecap="round" stroke-linejoin="round"/></svg>
<div class="t " style="top:185.00px;font-size:19px;color:#5a5e70;letter-spacing:0.090px;-webkit-text-stroke:0.2px #5a5e70;left:693.90px;">Actualizaciones recientes</div>
<div class="r" style="left:261px;top:222.5px;width:179px;height:4.0px;background:#4a86e8;border-radius:3px 3px 0 0;"></div>
<div class="r" style="left:270px;top:251px;width:584px;height:240px;background:#fff;border:1px solid #ebebf1;border-radius:10px;box-sizing:border-box;"></div>
<div class="r" style="left:271px;top:252px;width:582px;height:60px;background:#f8f8fa;border-radius:9px 9px 0 0;border-bottom:1px solid #ececf1;box-sizing:border-box;"></div>
<div class="t " style="top:270.00px;font-size:22.8px;color:#161616;letter-spacing:0.209px;-webkit-text-stroke:0.3px #161616;left:283.50px;">Total de cuentas por cobrar</div>
<svg class="r" style="left:571.0px;top:273.4px;" width="16" height="16" viewBox="0 0 16 16"><circle cx="8" cy="8" r="6.6" fill="none" stroke="#8e91a0" stroke-width="1.2"/><path d="M6 6.3 C6 5 7 4.3 8 4.3 C9.2 4.3 10 5.1 10 6.1 C10 7.4 8.1 7.6 8.1 9" fill="none" stroke="#8e91a0" stroke-width="1.2" stroke-linecap="round"/><circle cx="8.1" cy="11.2" r="0.75" fill="#8e91a0"/></svg>
<svg class="r" style="left:771.5px;top:275px;" width="16" height="16" viewBox="0 0 16 16"><circle cx="8" cy="8" r="7.9" fill="#4a86e8"/><path d="M8 4.2 V11.8 M4.2 8 H11.8" stroke="#fff" stroke-width="1.5"/></svg>
<div class="t " style="top:275.00px;font-size:16.5px;color:#161616;letter-spacing:-0.237px;-webkit-text-stroke:0.3px #161616;left:794.70px;">Nuevo</div>
<div class="t " style="top:331.00px;font-size:14.5px;color:#6a6d7f;letter-spacing:-0.065px;-webkit-text-stroke:0.15px #6a6d7f;left:295.30px;">Total de facturas sin pagar MXN1,240.41</div>
<div class="r" style="left:294px;top:353px;width:317px;height:14px;background:#4b8bea;border-radius:2px 0 0 2px;"></div>
<div class="r" style="left:611px;top:353px;width:218px;height:14px;background:#f2b94f;border-radius:0 2px 2px 0;"></div>
<div class="r" style="left:271px;top:392px;width:582px;height:1px;background:#ededf2;"></div>
<div class="t " style="top:418.00px;font-size:14.5px;color:#5190ec;letter-spacing:-0.517px;-webkit-text-stroke:0.15px #5190ec;left:300.50px;">ACTUAL</div>
<div class="t " style="top:443.00px;font-size:25px;color:#161616;letter-spacing:-0.472px;-webkit-text-stroke:0.15px #161616;left:300.50px;">MXN3,320.00</div>
<div class="r" style="left:549px;top:405px;width:1px;height:74px;background:#ececf1;"></div>
<div class="t " style="top:418.00px;font-size:14.5px;color:#e86a43;letter-spacing:-0.723px;-webkit-text-stroke:0.15px #e86a43;left:577.80px;">VENCIDO</div>
<div class="t " style="top:443.00px;font-size:25px;color:#161616;letter-spacing:-1.072px;-webkit-text-stroke:0.15px #161616;left:577.80px;">MXN1,240.41</div>
<svg class="r" style="left:726.9px;top:452px;" width="9" height="6" viewBox="0 0 9 6"><path d="M0 0 H9 L4.5 6 Z" fill="#161616"/></svg>
<div class="r" style="left:891px;top:251px;width:584px;height:240px;background:#fff;border:1px solid #ebebf1;border-radius:10px;box-sizing:border-box;"></div>
<div class="r" style="left:892px;top:252px;width:582px;height:60px;background:#f8f8fa;border-radius:9px 9px 0 0;border-bottom:1px solid #ececf1;box-sizing:border-box;"></div>
<div class="t " style="top:270.00px;font-size:22.8px;color:#161616;letter-spacing:0.199px;-webkit-text-stroke:0.3px #161616;left:904.50px;">Total de cuentas por pagar</div>
<svg class="r" style="left:1185.2px;top:273.4px;" width="16" height="16" viewBox="0 0 16 16"><circle cx="8" cy="8" r="6.6" fill="none" stroke="#8e91a0" stroke-width="1.2"/><path d="M6 6.3 C6 5 7 4.3 8 4.3 C9.2 4.3 10 5.1 10 6.1 C10 7.4 8.1 7.6 8.1 9" fill="none" stroke="#8e91a0" stroke-width="1.2" stroke-linecap="round"/><circle cx="8.1" cy="11.2" r="0.75" fill="#8e91a0"/></svg>
<svg class="r" style="left:1392.5px;top:275px;" width="16" height="16" viewBox="0 0 16 16"><circle cx="8" cy="8" r="7.9" fill="#4a86e8"/><path d="M8 4.2 V11.8 M4.2 8 H11.8" stroke="#fff" stroke-width="1.5"/></svg>
<div class="t " style="top:275.00px;font-size:16.5px;color:#161616;letter-spacing:-0.237px;-webkit-text-stroke:0.3px #161616;left:1415.70px;">Nuevo</div>
<div class="t " style="top:331.00px;font-size:14.5px;color:#6a6d7f;letter-spacing:0.063px;-webkit-text-stroke:0.15px #6a6d7f;left:916.30px;">Total de facturas sin pagar MXN688.00</div>
<div class="r" style="left:915px;top:353px;width:317px;height:14px;background:#4b8bea;border-radius:2px 0 0 2px;"></div>
<div class="r" style="left:1232px;top:353px;width:218px;height:14px;background:#f2b94f;border-radius:0 2px 2px 0;"></div>
<div class="r" style="left:892px;top:392px;width:582px;height:1px;background:#ededf2;"></div>
<div class="t " style="top:418.00px;font-size:14.5px;color:#5190ec;letter-spacing:-0.517px;-webkit-text-stroke:0.15px #5190ec;left:921.50px;">ACTUAL</div>
<div class="t " style="top:443.00px;font-size:25px;color:#161616;letter-spacing:-0.337px;-webkit-text-stroke:0.15px #161616;left:921.50px;">MXN408.00</div>
<div class="r" style="left:1170px;top:405px;width:1px;height:74px;background:#ececf1;"></div>
<div class="t " style="top:418.00px;font-size:14.5px;color:#e86a43;letter-spacing:-0.723px;-webkit-text-stroke:0.15px #e86a43;left:1198.80px;">VENCIDO</div>
<div class="t " style="top:443.00px;font-size:25px;color:#161616;letter-spacing:-0.448px;-webkit-text-stroke:0.15px #161616;left:1198.80px;">MXN280.00</div>
<svg class="r" style="left:1334.8px;top:452px;" width="9" height="6" viewBox="0 0 9 6"><path d="M0 0 H9 L4.5 6 Z" fill="#161616"/></svg>
<div class="r" style="left:270px;top:541px;width:1206px;height:449px;background:#fff;border:1px solid #ebebf1;border-radius:10px;box-sizing:border-box;"></div>
<div class="r" style="left:271px;top:542px;width:1204px;height:59px;background:#f8f8fa;border-radius:9px 9px 0 0;border-bottom:1px solid #ececf1;box-sizing:border-box;"></div>
<div class="t " style="top:560.00px;font-size:23.3px;color:#161616;letter-spacing:-0.095px;-webkit-text-stroke:0.3px #161616;left:283.00px;">Flujo de efectivo</div>
<svg class="r" style="left:457px;top:563.5px;" width="16" height="16" viewBox="0 0 16 16"><circle cx="8" cy="8" r="6.6" fill="none" stroke="#8e91a0" stroke-width="1.2"/><path d="M6 6.3 C6 5 7 4.3 8 4.3 C9.2 4.3 10 5.1 10 6.1 C10 7.4 8.1 7.6 8.1 9" fill="none" stroke="#8e91a0" stroke-width="1.2" stroke-linecap="round"/><circle cx="8.1" cy="11.2" r="0.75" fill="#8e91a0"/></svg>
<div class="t " style="top:565.00px;font-size:16px;color:#46484f;letter-spacing:0.124px;-webkit-text-stroke:0.2px #46484f;left:1342.50px;">Este año fiscal</div>
<svg class="r" style="left:1450px;top:568px;" width="16" height="12" viewBox="1450 568 16 12"><path d="M1454.7 572.6 L1458.3 576.1 L1461.9 572.6" fill="none" stroke="#4a86e8" stroke-width="2.1" stroke-linecap="round" stroke-linejoin="round"/></svg>
<svg class="r" style="left:0px;top:0px;pointer-events:none;" width="1500" height="962" viewBox="0 0 1500 962"><path d="M330.4 650.6 L397.4 650.6 L464.4 649.6 L527.2 649.6 C560.8 649.6 560.8 658.9 594.3 658.9 L659.1 658.9 L726.3 658.9 L791.2 658.9 L858.4 658.9 L925.6 658.9 L990.4 658.9 L1057.6 658.9 L1122.5 658.9 L1122.5 878.7 L330.4 878.7 Z" fill="#edf3fd"/><path d="M330 678.6 H1122" stroke="#e4eaf5" stroke-width="1" stroke-dasharray="1.5 2.5"/><path d="M330 707.3000000000001 H1122" stroke="#e4eaf5" stroke-width="1" stroke-dasharray="1.5 2.5"/><path d="M330 736.0 H1122" stroke="#e4eaf5" stroke-width="1" stroke-dasharray="1.5 2.5"/><path d="M330 764.7 H1122" stroke="#e4eaf5" stroke-width="1" stroke-dasharray="1.5 2.5"/><path d="M330 793.4000000000001 H1122" stroke="#e4eaf5" stroke-width="1" stroke-dasharray="1.5 2.5"/><path d="M330 822.1 H1122" stroke="#e4eaf5" stroke-width="1" stroke-dasharray="1.5 2.5"/><path d="M330 850.8000000000001 H1122" stroke="#e4eaf5" stroke-width="1" stroke-dasharray="1.5 2.5"/><path d="M330.4 650.6 L397.4 650.6 L464.4 649.6 L527.2 649.6 C560.8 649.6 560.8 658.9 594.3 658.9 L659.1 658.9 L726.3 658.9 L791.2 658.9 L858.4 658.9 L925.6 658.9 L990.4 658.9 L1057.6 658.9 L1122.5 658.9" fill="none" stroke="#78a6f3" stroke-width="2"/><circle cx="330.4" cy="650.6" r="4.3" fill="#3f7fe2"/><circle cx="397.4" cy="650.6" r="4.3" fill="#3f7fe2"/><circle cx="464.4" cy="649.6" r="4.3" fill="#3f7fe2"/><circle cx="527.2" cy="649.6" r="4.3" fill="#3f7fe2"/><circle cx="594.3" cy="658.9" r="4.3" fill="#3f7fe2"/><circle cx="659.1" cy="658.9" r="4.3" fill="#3f7fe2"/><circle cx="726.3" cy="658.9" r="4.3" fill="#3f7fe2"/><circle cx="791.2" cy="658.9" r="4.3" fill="#3f7fe2"/><circle cx="858.4" cy="658.9" r="4.3" fill="#3f7fe2"/><circle cx="925.6" cy="658.9" r="4.3" fill="#3f7fe2"/><circle cx="990.4" cy="658.9" r="4.3" fill="#3f7fe2"/><circle cx="1057.6" cy="658.9" r="4.3" fill="#3f7fe2"/><circle cx="1122.5" cy="658.9" r="4.3" fill="#3f7fe2"/></svg>
<div class="t " style="top:671.00px;font-size:13.5px;color:#8c8c8c;right:1181.50px;text-align:right;">35 K</div>
<div class="t " style="top:700.00px;font-size:13.5px;color:#8c8c8c;right:1181.50px;text-align:right;">30 K</div>
<div class="t " style="top:729.00px;font-size:13.5px;color:#8c8c8c;right:1181.50px;text-align:right;">25 K</div>
<div class="t " style="top:757.00px;font-size:13.5px;color:#8c8c8c;right:1181.50px;text-align:right;">20 K</div>
<div class="t " style="top:786.00px;font-size:13.5px;color:#8c8c8c;right:1181.50px;text-align:right;">15 K</div>
<div class="t " style="top:815.00px;font-size:13.5px;color:#8c8c8c;right:1181.50px;text-align:right;">10 K</div>
<div class="t " style="top:843.00px;font-size:13.5px;color:#8c8c8c;right:1181.50px;text-align:right;">5 K</div>
<div class="t " style="top:872.00px;font-size:13.5px;color:#8c8c8c;right:1181.50px;text-align:right;">0</div>
<div class="t " style="top:888.00px;font-size:13.5px;color:#8c8c8c;left:368.10px;width:60px;text-align:center;">Ene</div>
<div class="t " style="top:904.00px;font-size:11px;color:#8c8c8c;left:368.10px;width:60px;text-align:center;">2024</div>
<div class="t " style="top:888.00px;font-size:13.5px;color:#8c8c8c;left:435.10px;width:60px;text-align:center;">Feb</div>
<div class="t " style="top:904.00px;font-size:11px;color:#8c8c8c;left:435.10px;width:60px;text-align:center;">2024</div>
<div class="t " style="top:888.00px;font-size:13.5px;color:#8c8c8c;left:497.90px;width:60px;text-align:center;">Mar</div>
<div class="t " style="top:904.00px;font-size:11px;color:#8c8c8c;left:497.90px;width:60px;text-align:center;">2024</div>
<div class="t " style="top:888.00px;font-size:13.5px;color:#8c8c8c;left:565.00px;width:60px;text-align:center;">Abr</div>
<div class="t " style="top:904.00px;font-size:11px;color:#8c8c8c;left:565.00px;width:60px;text-align:center;">2024</div>
<div class="t " style="top:888.00px;font-size:13.5px;color:#8c8c8c;left:629.80px;width:60px;text-align:center;">May</div>
<div class="t " style="top:904.00px;font-size:11px;color:#8c8c8c;left:629.80px;width:60px;text-align:center;">2024</div>
<div class="t " style="top:888.00px;font-size:13.5px;color:#8c8c8c;left:697.00px;width:60px;text-align:center;">Jun</div>
<div class="t " style="top:904.00px;font-size:11px;color:#8c8c8c;left:697.00px;width:60px;text-align:center;">2024</div>
<div class="t " style="top:888.00px;font-size:13.5px;color:#8c8c8c;left:761.90px;width:60px;text-align:center;">Jul</div>
<div class="t " style="top:904.00px;font-size:11px;color:#8c8c8c;left:761.90px;width:60px;text-align:center;">2024</div>
<div class="t " style="top:888.00px;font-size:13.5px;color:#8c8c8c;left:829.10px;width:60px;text-align:center;">Ago</div>
<div class="t " style="top:904.00px;font-size:11px;color:#8c8c8c;left:829.10px;width:60px;text-align:center;">2024</div>
<div class="t " style="top:888.00px;font-size:13.5px;color:#8c8c8c;left:896.30px;width:60px;text-align:center;">Sep</div>
<div class="t " style="top:904.00px;font-size:11px;color:#8c8c8c;left:896.30px;width:60px;text-align:center;">2024</div>
<div class="t " style="top:888.00px;font-size:13.5px;color:#8c8c8c;left:961.10px;width:60px;text-align:center;">Oct</div>
<div class="t " style="top:904.00px;font-size:11px;color:#8c8c8c;left:961.10px;width:60px;text-align:center;">2024</div>
<div class="t " style="top:888.00px;font-size:13.5px;color:#8c8c8c;left:1028.30px;width:60px;text-align:center;">Nov</div>
<div class="t " style="top:904.00px;font-size:11px;color:#8c8c8c;left:1028.30px;width:60px;text-align:center;">2024</div>
<div class="t " style="top:888.00px;font-size:13.5px;color:#8c8c8c;left:1093.20px;width:60px;text-align:center;">Dic</div>
<div class="t " style="top:904.00px;font-size:11px;color:#8c8c8c;left:1093.20px;width:60px;text-align:center;">2024</div>
<div class="r" style="left:1165px;top:636px;width:1px;height:298px;background:#ececf1;"></div>
<div class="t " style="top:630.00px;font-size:15.5px;color:#7b7f8f;letter-spacing:0.416px;-webkit-text-stroke:0.2px #7b7f8f;right:70.58px;text-align:right;">Efectivo a 01 ene 2024</div>
<div class="t " style="top:657.00px;font-size:24px;color:#161616;letter-spacing:0.042px;-webkit-text-stroke:0.15px #161616;right:70.96px;text-align:right;">MXN39,686.84</div>
<div class="t " style="top:716.00px;font-size:15.5px;color:#6aab40;letter-spacing:0.334px;-webkit-text-stroke:0.2px #6aab40;right:70.67px;text-align:right;">Entrante</div>
<div class="t " style="top:742.00px;font-size:24px;color:#161616;letter-spacing:0.023px;-webkit-text-stroke:0.15px #161616;right:70.98px;text-align:right;">MXN3,482.25</div>
<div class="t " style="top:802.00px;font-size:15.5px;color:#e0573f;letter-spacing:0.184px;-webkit-text-stroke:0.2px #e0573f;right:70.82px;text-align:right;">Saliente</div>
<div class="t " style="top:828.00px;font-size:24px;color:#161616;letter-spacing:0.023px;-webkit-text-stroke:0.15px #161616;right:70.98px;text-align:right;">MXN4,969.52</div>
<div class="t " style="top:888.00px;font-size:15.5px;color:#4a86e8;letter-spacing:0.491px;-webkit-text-stroke:0.2px #4a86e8;right:70.51px;text-align:right;">Efectivo a 31 dic 2024</div>
<div class="t " style="top:915.00px;font-size:24px;color:#161616;letter-spacing:-0.424px;-webkit-text-stroke:0.15px #161616;right:71.42px;text-align:right;">MXN38,199.57</div>
<div class="r" style="left:1441px;top:756px;width:9px;height:2px;background:#1a1a1a;"></div>
<div class="r" style="left:1444.5px;top:752.5px;width:2.0px;height:8.5px;background:#1a1a1a;"></div>
<div class="r" style="left:1443.8px;top:841.2px;width:5.900000000000091px;height:1.599999999999909px;background:#1a1a1a;"></div>
<div class="r" style="left:1441.6px;top:926.1px;width:7.600000000000136px;height:1.6999999999999318px;background:#1a1a1a;"></div>
<div class="r" style="left:1441.6px;top:929.5px;width:7.600000000000136px;height:1.7000000000000455px;background:#1a1a1a;"></div>
</div>
</body></html>
